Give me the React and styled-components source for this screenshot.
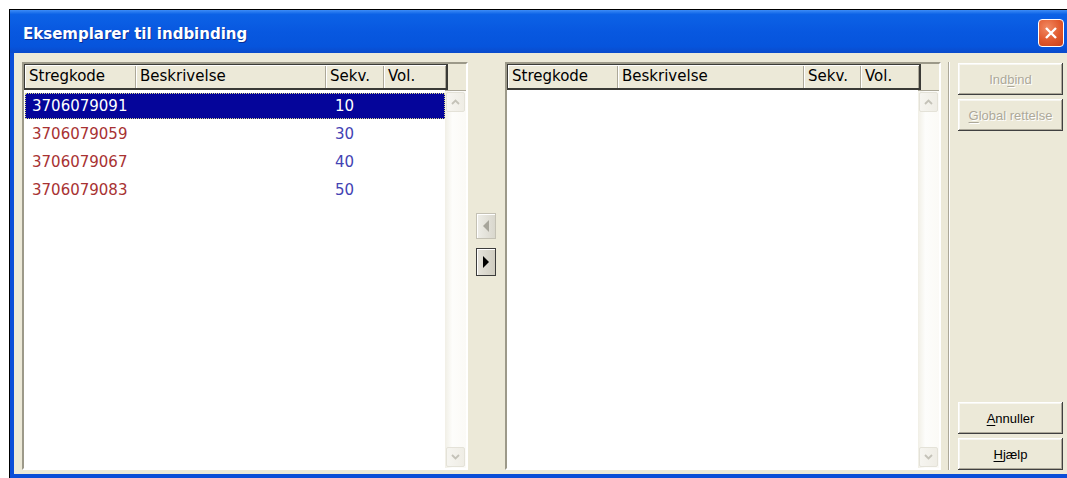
import React from "react";
import styled, { createGlobalStyle } from "styled-components";

const GlobalStyle = createGlobalStyle`
  html, body {
    margin: 0;
    padding: 0;
    background: #fff;
    overflow: hidden;
  }
  body {
    font-family: "DejaVu Sans", Verdana, sans-serif;
  }
`;

const leftColumns = [
  { title: "Stregkode", width: 111 },
  { title: "Beskrivelse", width: 190 },
  { title: "Sekv.", width: 58 },
  { title: "Vol.", width: 62 },
];

const rightColumns = [
  { title: "Stregkode", width: 110 },
  { title: "Beskrivelse", width: 186 },
  { title: "Sekv.", width: 57 },
  { title: "Vol.", width: 58 },
];

const items = [
  { code: "3706079091", seq: "10", selected: true },
  { code: "3706079059", seq: "30" },
  { code: "3706079067", seq: "40" },
  { code: "3706079083", seq: "50" },
];

const Page = styled.div`
  padding: 9px 0 0 9px;
  height: 478px;
  box-sizing: border-box;
`;

const Shadow = styled.div`
  border-top: 1px solid #000;
  border-left: 1px solid #000;
  width: 1062px;
  height: 469px;
`;

const Window = styled.div`
  width: 1061px;
  height: 468px;
  display: flex;
  flex-direction: column;
`;

const TitleBar = styled.div`
  height: 43px;
  flex: none;
  display: flex;
  align-items: center;
  padding: 0 7px 0 13px;
  background: linear-gradient(
    #3d8cf6 0%,
    #0c62e6 10%,
    #0858e0 50%,
    #0654dc 85%,
    #0a4acb 100%
  );
  box-sizing: border-box;
`;

const Title = styled.span`
  color: #fff;
  font: bold 15px "DejaVu Sans", Verdana, sans-serif;
  padding-top: 5px;
  text-shadow: 1px 1px #0a2f96;
`;

const CloseButton = styled.div`
  margin-left: auto;
  margin-top: 2px;
  width: 26px;
  height: 28px;
  border: 1px solid #fff;
  border-radius: 4px;
  box-sizing: border-box;
  background: radial-gradient(circle at 35% 30%, #f28a63 0%, #e0582c 55%, #c8401a 100%);
  display: flex;
  align-items: center;
  justify-content: center;
`;

const Body = styled.div`
  flex: 1;
  display: flex;
  background: #ece9d8;
  border: 4px solid #0b4ed8;
  border-top: none;
  padding: 9px 0 4px 8px;
`;

const ListFrame = styled.div`
  width: ${(p) => p.$width}px;
  flex: none;
  display: flex;
  flex-direction: column;
  background: #ece9d8;
  border: 2px solid;
  border-color: #9c9989 #fff #fff #9c9989;
  box-sizing: border-box;
`;

const HeaderRow = styled.div`
  display: flex;
  height: 26px;
  flex: none;
`;

const HeaderCells = styled.div`
  display: flex;
  border: 1px solid #3a3a36;
  border-right-width: 2px;
  border-bottom-width: 2px;
  box-sizing: border-box;
`;

const HeaderCell = styled.div`
  width: ${(p) => p.$width}px;
  box-sizing: border-box;
  padding-left: 4px;
  font-size: 15px;
  line-height: 23px;
  color: #000;
  box-shadow: inset 1px 1px #fff, inset -1px 0 #aca899;
  white-space: nowrap;
  overflow: hidden;
`;

const ListBody = styled.div`
  flex: 1;
  display: flex;
  min-height: 0;
`;

const Rows = styled.div`
  flex: 1;
  background: #fff;
  padding: 3px 0 0 1px;
`;

const Row = styled.div`
  display: flex;
  height: 26px;
  margin-bottom: 2px;
  align-items: center;
  box-sizing: border-box;
  font-size: 15px;
  background: ${(p) => (p.$selected ? "#05059a" : "transparent")};
  outline: ${(p) => (p.$selected ? "1px dotted #d6d68a" : "none")};
  outline-offset: -1px;
`;

const Cell = styled.div`
  width: ${(p) => p.$width}px;
  box-sizing: border-box;
  padding-left: ${(p) => p.$pad}px;
  color: ${(p) => (p.$selected ? "#fff" : p.$color)};
  white-space: nowrap;
`;

const ScrollBar = styled.div`
  width: 21px;
  flex: none;
  display: flex;
  flex-direction: column;
  justify-content: space-between;
  border-top: 1px solid #aca899;
  padding: 1px 0 1px 1px;
  box-sizing: border-box;
  background: linear-gradient(90deg, #f1efe6 0%, #fdfdfb 35%, #fbfaf6 100%);
`;

const ScrollArrow = styled.div`
  width: 19px;
  height: 20px;
  border: 1px solid #e4e2d8;
  border-radius: 2px;
  box-sizing: border-box;
  background: linear-gradient(90deg, #f6f5f0, #efede5);
  display: flex;
  align-items: center;
  justify-content: center;
`;

const ArrowColumn = styled.div`
  width: 37px;
  flex: none;
  display: flex;
  flex-direction: column;
  padding: 151px 0 0 8px;
  gap: 9px;
  box-sizing: border-box;
`;

const MoveButton = styled.div`
  width: 20px;
  height: ${(p) => (p.$enabled ? 28 : 26)}px;
  box-sizing: border-box;
  display: flex;
  align-items: center;
  justify-content: center;
  border: 1px solid ${(p) => (p.$enabled ? "#3c3c3c" : "#c4c1b4")};
  background: ${(p) =>
    p.$enabled
      ? "linear-gradient(90deg, #e6e4dc, #cfccc0)"
      : "linear-gradient(90deg, #efeee8, #d9d7cd)"};
  box-shadow: inset 1px 1px #fff;
`;

const Separator = styled.div`
  width: 2px;
  flex: none;
  margin-left: 7px;
  border-left: 1px solid #aca899;
  border-right: 1px solid #fff;
  box-sizing: border-box;
`;

const ButtonColumn = styled.div`
  width: 105px;
  flex: none;
  margin-left: 8px;
  padding-top: 1px;
  display: flex;
  flex-direction: column;
  gap: 4px;
`;

const Spacer = styled.div`
  flex: 1;
`;

const ActionButton = styled.div`
  height: 32px;
  flex: none;
  display: flex;
  align-items: center;
  justify-content: center;
  background: #ece9d8;
  box-shadow: inset -1px -1px #404040, inset 1px 1px #fff, inset -2px -2px #aca899,
    inset 2px 2px #f7f6f0;
  font: 13px "Liberation Sans", Arial, sans-serif;
  color: ${(p) => (p.$disabled ? "#aca899" : "#000")};
  text-shadow: ${(p) => (p.$disabled ? "1px 1px #fff" : "none")};
  u {
    text-underline-offset: 2px;
  }
`;

const Chevron = ({ down }) => (
  <svg width="9" height="6" viewBox="0 0 9 6">
    <path
      d={down ? "M1 1 L4.5 4.5 L8 1" : "M1 5 L4.5 1.5 L8 5"}
      fill="none"
      stroke="#c4c2b8"
      strokeWidth="1.8"
    />
  </svg>
);

const List = ({ width, columns, rows }) => (
  <ListFrame $width={width}>
    <HeaderRow>
      <HeaderCells>
        {columns.map((c) => (
          <HeaderCell key={c.title} $width={c.width}>
            {c.title}
          </HeaderCell>
        ))}
      </HeaderCells>
    </HeaderRow>
    <ListBody>
      <Rows>
        {rows.map((r) => (
          <Row key={r.code} $selected={r.selected}>
            <Cell $width={columns[0].width - 1} $pad={7} $color="#a83232" $selected={r.selected}>
              {r.code}
            </Cell>
            <Cell $width={columns[1].width} $pad={4} $selected={r.selected} />
            <Cell $width={columns[2].width} $pad={10} $color="#4343b3" $selected={r.selected}>
              {r.seq}
            </Cell>
          </Row>
        ))}
      </Rows>
      <ScrollBar>
        <ScrollArrow>
          <Chevron />
        </ScrollArrow>
        <ScrollArrow>
          <Chevron down />
        </ScrollArrow>
      </ScrollBar>
    </ListBody>
  </ListFrame>
);

export default function App() {
  return (
    <>
      <GlobalStyle />
      <Page>
        <Shadow>
          <Window>
            <TitleBar>
              <Title>Eksemplarer til indbinding</Title>
              <CloseButton>
                <svg width="14" height="14" viewBox="0 0 14 14">
                  <path d="M2 2 L12 12 M12 2 L2 12" stroke="#fff" strokeWidth="2.4" />
                </svg>
              </CloseButton>
            </TitleBar>
            <Body>
              <List width={446} columns={leftColumns} rows={items} />
              <ArrowColumn>
                <MoveButton>
                  <svg width="7" height="12" viewBox="0 0 7 12">
                    <path d="M6 0 L0 6 L6 12 Z" fill="#a7a59b" />
                  </svg>
                </MoveButton>
                <MoveButton $enabled>
                  <svg width="7" height="12" viewBox="0 0 7 12">
                    <path d="M0 0 L6 6 L0 12 Z" fill="#000" />
                  </svg>
                </MoveButton>
              </ArrowColumn>
              <List width={436} columns={rightColumns} rows={[]} />
              <Separator />
              <ButtonColumn>
                <ActionButton $disabled>
                  <span>
                    Ind<u>b</u>ind
                  </span>
                </ActionButton>
                <ActionButton $disabled>
                  <span>
                    <u>G</u>lobal rettelse
                  </span>
                </ActionButton>
                <Spacer />
                <ActionButton>
                  <span>
                    <u>A</u>nnuller
                  </span>
                </ActionButton>
                <ActionButton>
                  <span>
                    <u>H</u>jælp
                  </span>
                </ActionButton>
              </ButtonColumn>
            </Body>
          </Window>
        </Shadow>
      </Page>
    </>
  );
}
